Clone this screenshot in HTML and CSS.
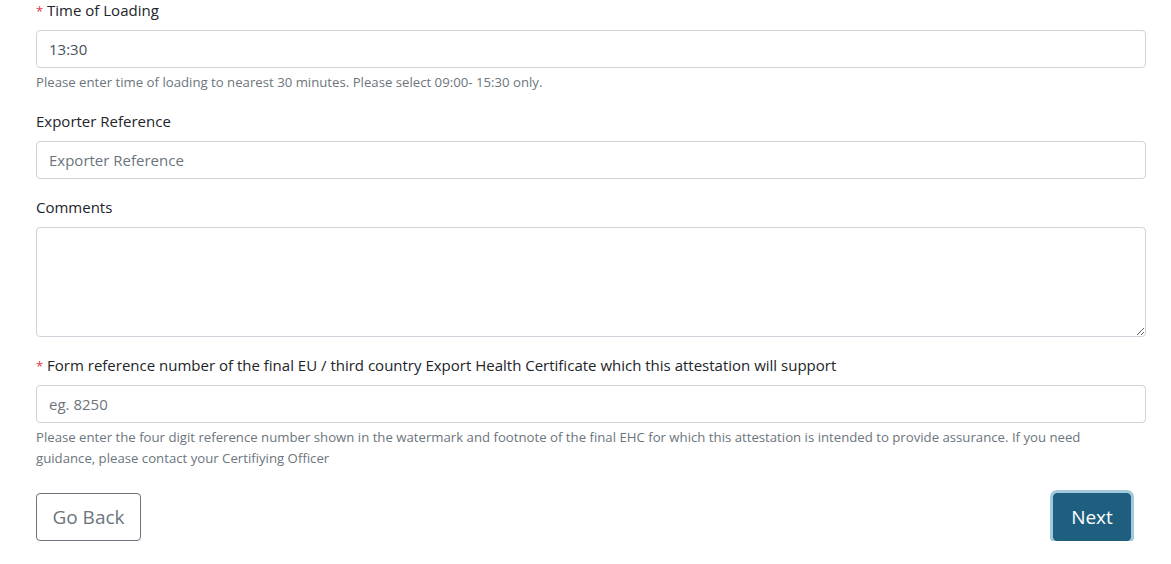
FILE: index.html
```html
<!DOCTYPE html>
<html lang="en">
<head>
    <meta charset="UTF-8">
    <meta name="viewport" content="width=device-width, initial-scale=1.0">
    <title>Attestation Details</title>
    <link rel="stylesheet" href="styles.css">
</head>
<body>
    <div class="container">
        <form id="attestationForm">
            <div class="form-group">
                <label for="loadingTime"><span class="required">*</span> Time of Loading</label>
                <input type="text" id="loadingTime" class="form-control" value="13:30" />
                <small class="form-text">Please enter time of loading to nearest 30 minutes. Please select 09:00- 15:30 only.</small>
            </div>

            <div class="form-group">
                <label for="exporterRef">Exporter Reference</label>
                <input type="text" id="exporterRef" class="form-control" placeholder="Exporter Reference" />
            </div>

            <div class="form-group">
                <label for="comments">Comments</label>
                <textarea id="comments" class="form-control" rows="4"></textarea>
            </div>

            <div class="form-group">
                <label for="ehcRef"><span class="required">*</span> Form reference number of the final EU / third country Export Health Certificate which this attestation will support</label>
                <input type="text" id="ehcRef" class="form-control" placeholder="eg. 8250" />
                <small class="form-text">Please enter the four digit reference number shown in the watermark and footnote of the final EHC for which this attestation is intended to provide assurance. If you need guidance, please contact your Certifiying Officer</small>
            </div>

            <div class="actions">
                <button type="button" class="btn btn-outline">Go Back</button>
                <button type="submit" class="btn btn-primary">Next</button>
            </div>
        </form>
    </div>
</body>
</html>
```

FILE: styles.css
```css
body {
    font-family: "Open Sans", "Noto Sans", Arial, sans-serif;
    margin: 0;
    padding: 0;
    background-color: #fff;
    color: #212529;
}

.container {
    width: 1110px;
    margin: -2px 0 0 36px;
}

.form-group {
    margin-bottom: 16px;
}

label {
    display: block;
    margin-bottom: 8px;
    font-size: 15px;
    line-height: 24px;
    color: #212529;
}

.required {
    color: #dc3545;
    font-size: 13px;
    line-height: 1;
}

.form-control {
    display: block;
    width: 100%;
    height: 38px;
    padding: 6px 12px;
    font-family: inherit;
    font-size: 15px;
    line-height: 24px;
    color: #495057;
    background-color: #fff;
    border: 1px solid #ced4da;
    border-radius: 4px;
    box-sizing: border-box;
}

.form-control::placeholder {
    color: #6c757d;
}

textarea.form-control {
    height: 110px;
    resize: vertical;
}

.form-text {
    display: block;
    margin-top: 4px;
    padding-right: 50px;
    font-size: 13.2px;
    line-height: 21px;
    color: #6c757d;
}

.actions {
    display: flex;
    justify-content: space-between;
    align-items: center;
    margin-top: 24px;
    padding-right: 15px;
}

.btn {
    height: 48px;
    padding: 8px 12px;
    font-family: inherit;
    font-size: 19px;
    line-height: 30px;
    white-space: nowrap;
    border-radius: 4px;
    box-sizing: border-box;
    cursor: pointer;
}

.btn-outline {
    width: 105px;
    background-color: #fff;
    border: 1px solid #6c757d;
    color: #6c757d;
}

.btn-primary {
    width: 78px;
    background-color: #1e5f7f;
    border: 1px solid #1e5f7f;
    color: #fff;
    box-shadow: 0 0 0 3px #a3c9dc;
}
```
